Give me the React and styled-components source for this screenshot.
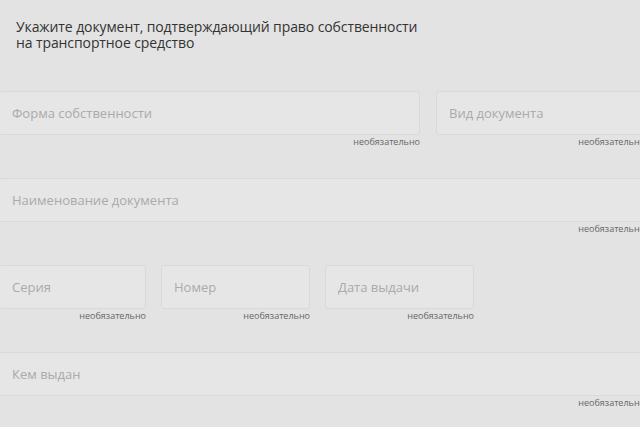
import React from "react";
import styled, { createGlobalStyle } from "styled-components";

const GlobalStyle = createGlobalStyle`
  html, body {
    margin: 0;
    padding: 0;
    overflow: hidden;
    background: #e3e3e3;
  }
  body {
    font-family: "Open Sans", "Liberation Sans", Arial, sans-serif;
  }
`;

const Page = styled.div`
  width: 646px;
  margin-left: -1px;
  padding-top: 19px;
`;

const Title = styled.h2`
  margin: 0 0 40px 17px;
  font-size: 14px;
  font-weight: 400;
  line-height: 16px;
  color: #333;
  letter-spacing: -0.1px;
`;

const Row = styled.div`
  display: grid;
  grid-template-columns: ${(p) => p.$cols};
  column-gap: ${(p) => p.$gap || "16px"};
  margin-bottom: 31px;
`;

const Field = styled.div`
  display: flex;
  flex-direction: column;
  min-width: 0;
`;

const Input = styled.input`
  box-sizing: border-box;
  height: 44px;
  width: 100%;
  padding: 0 12px;
  border: 1px solid #d9d9d9;
  border-radius: 3px;
  background: #e6e6e6;
  font-family: inherit;
  font-size: 13px;
  color: #333;
  outline: none;

  &::placeholder {
    color: #aaa;
  }
`;

const Hint = styled.span`
  align-self: flex-end;
  margin-top: 2px;
  font-size: 9px;
  line-height: 10px;
  color: #666;
`;

const FormField = ({ placeholder }) => (
  <Field>
    <Input placeholder={placeholder} />
    <Hint>необязательно</Hint>
  </Field>
);

export default function App() {
  return (
    <>
      <GlobalStyle />
      <Page>
        <Title>
          Укажите документ, подтверждающий право собственности
          <br />
          на транспортное средство
        </Title>

        <Row $cols="421px 1fr">
          <FormField placeholder="Форма собственности" />
          <FormField placeholder="Вид документа" />
        </Row>

        <Row $cols="1fr">
          <FormField placeholder="Наименование документа" />
        </Row>

        <Row $cols="147px 149px 149px" $gap="15px">
          <FormField placeholder="Серия" />
          <FormField placeholder="Номер" />
          <FormField placeholder="Дата выдачи" />
        </Row>

        <Row $cols="1fr">
          <FormField placeholder="Кем выдан" />
        </Row>
      </Page>
    </>
  );
}
